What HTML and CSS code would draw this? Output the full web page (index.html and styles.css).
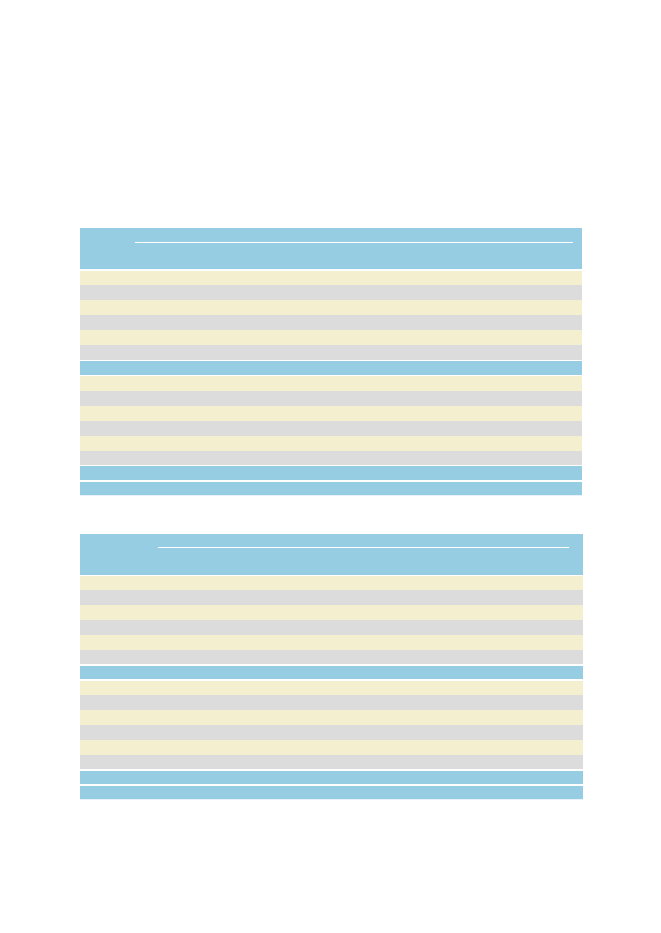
FILE: index.html
```html
<!DOCTYPE html>
<html>
<head>
<meta charset="utf-8">
<link rel="stylesheet" href="styles.css">
</head>
<body>
<div class="page">
  <div class="tbl t1">
    <div class="head"><div class="rule"></div></div>
    <div class="row y h14 m2"></div>
    <div class="row g h15"></div>
    <div class="row y h15"></div>
    <div class="row g h15"></div>
    <div class="row y h15"></div>
    <div class="row g h15"></div>
    <div class="row b h14 m1"></div>
    <div class="row y h15 m1"></div>
    <div class="row g h15"></div>
    <div class="row y h15"></div>
    <div class="row g h15"></div>
    <div class="row y h15"></div>
    <div class="row g h14"></div>
    <div class="row b h14 m1"></div>
    <div class="row b h13 m2"></div>
    <div class="edge"></div>
  </div>
  <div class="tbl t2">
    <div class="head"><div class="rule"></div></div>
    <div class="row y h14 m1"></div>
    <div class="row g h15"></div>
    <div class="row y h15"></div>
    <div class="row g h15"></div>
    <div class="row y h15"></div>
    <div class="row g h14"></div>
    <div class="row b h13 m2"></div>
    <div class="row y h14 m2"></div>
    <div class="row g h15"></div>
    <div class="row y h15"></div>
    <div class="row g h15"></div>
    <div class="row y h15"></div>
    <div class="row g h14"></div>
    <div class="row b h13 m2"></div>
    <div class="row b h13 m2"></div>
    <div class="edge"></div>
  </div>
</div>
</body>
</html>
```
FILE: styles.css
```css
html, body {
  margin: 0;
  padding: 0;
  background: #ffffff;
  font-family: "Liberation Sans", Arial, sans-serif;
}
.page {
  width: 661px;
  height: 933px;
  padding-top: 228px;
  padding-left: 80px;
  box-sizing: border-box;
  display: flex;
  flex-direction: column;
}
.tbl {
  display: flex;
  flex-direction: column;
}
.t1 { width: 502px; }
.t2 { width: 503px; margin-top: 38px; }
.head {
  height: 41px;
  background: #97cde2;
  box-sizing: border-box;
}
.t1 .head { padding: 14px 9px 0 55px; }
.t2 .head { padding: 13px 14px 0 78px; }
.rule {
  border-top: 1px solid #ffffff;
}
.row { flex: none; }
.y { background: #f4f0cf; }
.g { background: #dcdcdc; }
.b { background: #97cde2; }
.h13 { height: 13px; }
.h14 { height: 14px; }
.h15 { height: 15px; }
.m1 { margin-top: 1px; }
.m2 { margin-top: 2px; }
.edge {
  height: 1px;
  background: #e8f4f9;
}
```
